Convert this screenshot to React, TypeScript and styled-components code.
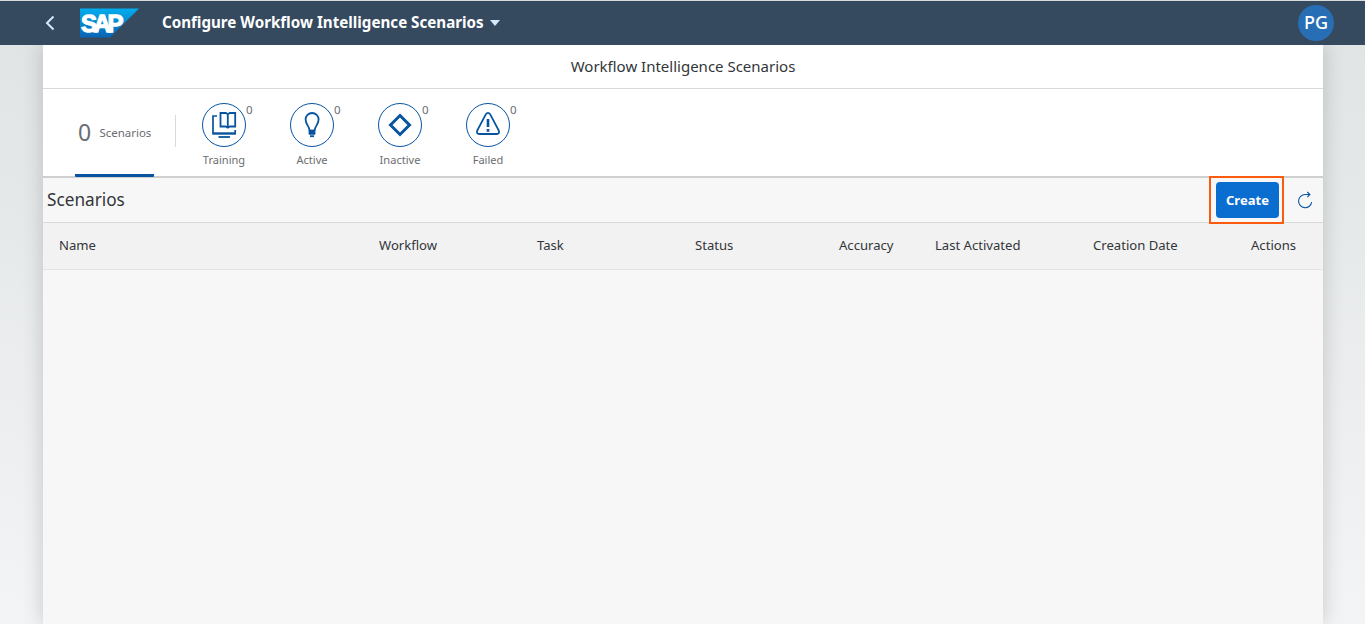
import React from 'react';
import styled, { createGlobalStyle } from 'styled-components';

const Global = createGlobalStyle`
  * { box-sizing: border-box; }
  html, body { margin: 0; padding: 0; height: 100%; overflow: hidden; }
  body { font-family: 'Noto Sans', 'Liberation Sans', sans-serif; color: #32363a; }
`;

const Page = styled.div`
  height: 624px;
  display: flex;
  flex-direction: column;
  border-top: 1px solid #d9dcdd;
  background: linear-gradient(to bottom, #dfe3e4 0, #f3f4f5 100%);
`;

const Shell = styled.header`
  flex: none;
  position: relative;
  z-index: 1;
  height: 44px;
  display: flex;
  align-items: center;
  padding: 0 31px 0 44px;
  background: #354a5f;
  color: #fff;
`;

const BackIcon = styled.svg`
  width: 12px;
  height: 16px;
  margin-right: 24px;
`;

const Logo = styled.svg`
  width: 59px;
  height: 30px;
`;

const AppTitle = styled.h1`
  margin: 0 6px 0 23px;
  font-size: 15.17px;
  font-weight: 700;
  line-height: 20px;
  padding-bottom: 2px;
  white-space: nowrap;
`;

const Caret = styled.svg`
  width: 10px;
  height: 6px;
`;

const Avatar = styled.div`
  margin-left: auto;
  width: 36px;
  height: 36px;
  border-radius: 50%;
  background: #286eb4;
  display: flex;
  align-items: center;
  justify-content: center;
  font-size: 18px;
  font-weight: 500;
  line-height: 34px;
  padding-bottom: 2px;
`;

const Content = styled.main`
  flex: 1;
  width: 1280px;
  margin-left: 43px;
  background: #f7f7f7;
  box-shadow: 0 0 20px rgba(0, 0, 0, 0.18);
`;

const PageTitle = styled.div`
  height: 44px;
  border-bottom: 1px solid #d9d9d9;
  background: #fff;
  font-size: 15px;
  line-height: 43px;
  text-align: center;
`;

const TabBar = styled.nav`
  height: 89px;
  display: flex;
  align-items: flex-start;
  padding-left: 32px;
  background: #fff;
  border-bottom: 2px solid #cfcfcf;
  color: #6a6d70;
`;

const TotalTab = styled.div`
  position: relative;
  width: 79px;
  height: 88px;
  display: flex;
  align-items: center;
  padding: 1px 0 0 3px;
  border-bottom: 3px solid #0854a0;
  border-radius: 0 0 1px 1px;
`;

const TotalCount = styled.span`
  width: 21.5px;
  font-size: 23px;
  line-height: 32px;
`;

const TotalLabel = styled.span`
  font-size: 11.45px;
  line-height: 16px;
  padding-top: 1px;
`;

const Separator = styled.div`
  width: 1px;
  height: 32px;
  margin: 26px 4px 0 21px;
  background: #d9d9d9;
`;

const IconTab = styled.div`
  width: 88px;
  padding-top: 14px;
  display: flex;
  flex-direction: column;
  align-items: center;
`;

const IconRing = styled.div`
  position: relative;
  width: 44px;
  height: 44px;
  border: 1px solid #0854a0;
  border-radius: 50%;
  color: #0854a0;
`;

const Glyph = styled.svg`
  display: block;
  width: 42px;
  height: 42px;
`;

const Count = styled.span`
  position: absolute;
  left: 43px;
  top: -2px;
  font-size: 11.5px;
  line-height: 15px;
  color: #6a6d70;
`;

const TabLabel = styled.span`
  margin-top: 5px;
  font-size: 11.05px;
  line-height: 16px;
`;

const Toolbar = styled.div`
  height: 45px;
  display: flex;
  align-items: center;
  padding: 0 10px 0 4px;
  border-bottom: 1px solid #d9d9d9;
`;

const ToolbarTitle = styled.h2`
  flex: 1;
  margin: 0;
  font-size: 17.2px;
  font-weight: 400;
  line-height: 24px;
`;

const Highlight = styled.div`
  width: 75px;
  height: 48px;
  margin: -2px 13px -1px 0;
  padding: 4px 3px 4px 5px;
  border: 2px solid #fa5b0f;
`;

const CreateButton = styled.button`
  display: block;
  width: 63px;
  height: 36px;
  padding: 0;
  border: 0;
  border-radius: 4px;
  background: #0a6ed1;
  color: #fff;
  font: 700 13.05px/36px 'Noto Sans', sans-serif;
`;

const Refresh = styled.svg`
  width: 16px;
  height: 18px;
`;

const HeaderRow = styled.div`
  height: 47px;
  display: grid;
  grid-template-columns: 320px 158px 158px 144px 96px 158px 158px 72px;
  padding-left: 16px;
  background: #f2f2f2;
  border-bottom: 1px solid #e4e4e4;
  font-size: 13.1px;
  line-height: 44px;
`;

const HeaderCell = styled.div`
  white-space: nowrap;
`;

const tabs = [
  {
    label: 'Training',
    glyph: (
      <>
        <path d="M14 12H10V29M32.200 26v3" strokeWidth="1.700" />
        <path d="M9.200 29.500h23.800" strokeWidth="2.400" />
        <path d="M15.500 33h11.500" strokeWidth="1.800" />
        <path d="M17.500 9h5.300l2 1.300L26.800 9h5.400v13.500h-5.400l-2 1.300-2-1.300h-5.300zM24.800 10v13.500" strokeWidth="1.800" />
      </>
    ),
  },
  {
    label: 'Active',
    glyph: (
      <>
        <path d="M18.600 26.500c0-4-4-6-4-11a6.500 6.500 0 0 1 13 0c0 5-4 7-4 11" strokeWidth="1.800" />
        <path d="M18 26h6v4.300h-6z" fill="currentColor" strokeWidth="0.8" />
        <path d="M19 32.200h4" strokeWidth="1.800" />
      </>
    ),
  },
  { label: 'Inactive', glyph: <path d="M21 11.500 30.500 21 21 30.500 11.500 21z" strokeWidth="3" /> },
  {
    label: 'Failed',
    glyph: (
      <>
        <path
          d="M18.900 10.200q2.100-2.800 4.200 0l8.700 16.300q1 3.200-2 3.500H12.200q-3-.3-2-3.500z"
          strokeWidth="1.800"
        />
        <path d="M21 15v8M21 25v2.700" strokeWidth="2.600" />
      </>
    ),
  },
];

const columns = [
  'Name',
  'Workflow',
  'Task',
  'Status',
  'Accuracy',
  'Last Activated',
  'Creation Date',
  'Actions',
];

export default function App() {
  return (
    <Page>
      <Global />
      <Shell>
        <BackIcon viewBox="0 0 12 16">
          <path d="M9.500 1.500 3 8l6.500 6.500" fill="none" stroke="#d1e8ff" strokeWidth="2" />
        </BackIcon>
        <Logo viewBox="0 0 59 30">
          <defs>
            <linearGradient id="sapBlue" x1="0" y1="0" x2="0" y2="1">
              <stop offset="0" stopColor="#00aeef" />
              <stop offset="1" stopColor="#0b63b4" />
            </linearGradient>
          </defs>
          <path d="M0 .5h59L30 29.500H0z" fill="url(#sapBlue)" />
          <text
            x="1"
            y="23.500"
            fill="#fff"
            stroke="#fff"
            strokeWidth="1.300"
            fontFamily="'Liberation Sans', sans-serif"
            fontWeight="700"
            fontSize="24"
            textLength="42.500"
            lengthAdjust="spacing"
          >
            SAP
          </text>
        </Logo>
        <AppTitle>Configure Workflow Intelligence Scenarios</AppTitle>
        <Caret viewBox="0 0 10 6">
          <path d="M0 0h10L5 6z" fill="#d1e8ff" />
        </Caret>
        <Avatar>PG</Avatar>
      </Shell>
      <Content>
        <PageTitle>Workflow Intelligence Scenarios</PageTitle>
        <TabBar>
          <TotalTab>
            <TotalCount>0</TotalCount>
            <TotalLabel>Scenarios</TotalLabel>
          </TotalTab>
          <Separator />
          {tabs.map((tab) => (
            <IconTab key={tab.label}>
              <IconRing>
                <Glyph viewBox="0 0 42 42" fill="none" stroke="currentColor">
                  {tab.glyph}
                </Glyph>
                <Count>0</Count>
              </IconRing>
              <TabLabel>{tab.label}</TabLabel>
            </IconTab>
          ))}
        </TabBar>
        <Toolbar>
          <ToolbarTitle>Scenarios</ToolbarTitle>
          <Highlight>
            <CreateButton>Create</CreateButton>
          </Highlight>
          <Refresh viewBox="0 0 16 18" fill="none" stroke="#0854a0" strokeWidth="1.100">
            <path d="M14.700 11a6.600 6.600 0 1 1-6.500-7.500h4.600M10.300 1l2.600 2.500-2.600 2.600" />
          </Refresh>
        </Toolbar>
        <HeaderRow>
          {columns.map((label) => (
            <HeaderCell key={label}>{label}</HeaderCell>
          ))}
        </HeaderRow>
      </Content>
    </Page>
  );
}
